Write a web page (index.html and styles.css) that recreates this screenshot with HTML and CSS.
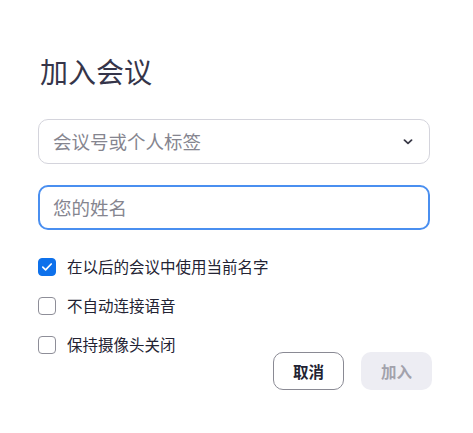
FILE: index.html
```html
<!DOCTYPE html>
<html lang="zh-CN">
<head>
<meta charset="utf-8">
<link rel="stylesheet" href="styles.css">
</head>
<body>
<div class="dialog">
  <h1 class="title">加入会议</h1>
  <div class="select">
    <span class="placeholder">会议号或个人标签</span>
    <svg class="chevron" width="10" height="6" viewBox="0 0 10 6"><path d="M1.5 1.2 L5 4.4 L8.5 1.2" fill="none" stroke="#3a3a48" stroke-width="1.8" stroke-linecap="round" stroke-linejoin="round"/></svg>
  </div>
  <div class="input">
    <span class="placeholder">您的姓名</span>
  </div>
  <div class="options">
    <label class="option">
      <span class="box checked"><svg width="12" height="10" viewBox="0 0 12 10"><path d="M1.8 5.2 L4.6 7.8 L10.2 2" fill="none" stroke="#fff" stroke-width="1.7" stroke-linecap="round" stroke-linejoin="round"/></svg></span>
      <span class="label">在以后的会议中使用当前名字</span>
    </label>
    <label class="option">
      <span class="box"></span>
      <span class="label">不自动连接语音</span>
    </label>
    <label class="option">
      <span class="box"></span>
      <span class="label">保持摄像头关闭</span>
    </label>
  </div>
  <div class="actions">
    <button class="btn cancel">取消</button>
    <button class="btn join">加入</button>
  </div>
</div>
</body>
</html>
```
FILE: styles.css
```css
html, body {
  margin: 0;
  padding: 0;
  background: #ffffff;
}
body {
  font-family: "Noto Sans CJK SC", "Noto Sans", sans-serif;
  color: #232333;
}
.dialog {
  width: 392px;
  padding: 51px 0 0 38px;
}
.title {
  margin: 0 0 0 2px;
  font-size: 28px;
  font-weight: 400;
  line-height: 40px;
  color: #35354a;
}
.select, .input {
  box-sizing: border-box;
  height: 45px;
  border-radius: 10px;
  display: flex;
  align-items: center;
  padding: 0 14px 0 14px;
}
.select {
  margin-top: 28px;
  border: 1px solid #d4d4dc;
  justify-content: space-between;
}
.input {
  margin-top: 21px;
  border: 2px solid #4a8ff0;
  padding-left: 13px;
}
.placeholder {
  font-size: 18.5px;
  color: #85858f;
  line-height: 1;
}
.chevron {
  margin-right: 2px;
}
.options {
  margin-top: 28px;
  display: flex;
  flex-direction: column;
  gap: 21px;
}
.option {
  display: flex;
  align-items: center;
  height: 18px;
}
.box {
  box-sizing: border-box;
  width: 18px;
  height: 18px;
  border-radius: 4px;
  border: 1.5px solid #8e8e98;
  display: flex;
  align-items: center;
  justify-content: center;
}
.box.checked {
  background: #0e71eb;
  border-color: #0e71eb;
}
.label {
  margin-left: 11px;
  font-size: 15.5px;
  color: #232333;
  line-height: 1;
}
.actions {
  display: flex;
  justify-content: flex-end;
  gap: 17px;
  margin-top: -2px;
  margin-right: -2px;
}
.btn {
  box-sizing: border-box;
  height: 38px;
  width: 71px;
  border-radius: 10px;
  font-family: inherit;
  font-size: 15.5px;
  font-weight: 700;
  padding: 0;
}
.cancel {
  background: #fff;
  border: 1.5px solid #8a8a94;
  color: #232333;
}
.join {
  background: #ededf3;
  border: none;
  color: #a2a2ac;
}
```
